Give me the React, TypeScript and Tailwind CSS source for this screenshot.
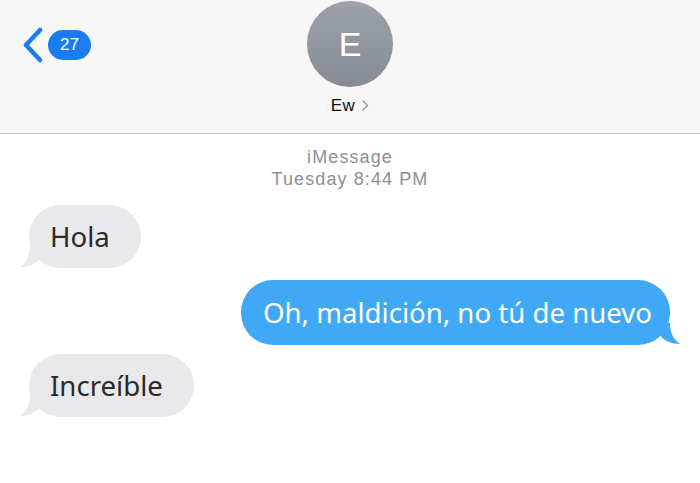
import React from 'react';

const font = { fontFamily: '"Noto Sans", "Open Sans", sans-serif' };
const sys = { fontFamily: '"Liberation Sans", Arial, sans-serif' };

const Incoming: React.FC<{ text: string }> = ({ text }) => (
  <div className="relative ml-[29px] self-start">
    <svg className="absolute -left-[9px] bottom-0" width="24" height="22" viewBox="0 0 24 22">
      <path d="M10 0 C10 10 6 17 0 21 C8 21 14 18 18 15 L24 0 Z" fill="#e9e9eb" />
    </svg>
    <div className="relative rounded-[32px] bg-[#e9e9eb] h-[63px] pl-[21px] pr-[31px] flex items-center text-[27.6px] text-[#2a2a2a]">
      {text}
    </div>
  </div>
);

const Outgoing: React.FC<{ text: string }> = ({ text }) => (
  <div className="relative mr-[30px] self-end">
    <svg className="absolute -right-[10px] bottom-0" width="24" height="22" viewBox="0 0 24 22">
      <path d="M14 0 C14 10 18 17 24 21 C16 21 10 18 6 15 L0 0 Z" fill="#3fa9f5" />
    </svg>
    <div className="relative rounded-[32px] bg-[#3fa9f5] h-[65px] pl-[22px] pr-[18px] flex items-center text-[27.6px] text-white">
      {text}
    </div>
  </div>
);

export default function App() {
  return (
    <div className="w-[700px] h-[483px] bg-white overflow-hidden" style={font}>
      <div className="relative h-[134px] bg-[#f6f6f6] border-b border-[#c8c8c8] flex flex-col items-center" style={sys}>
        <div className="absolute left-[22px] top-[27px] flex items-center gap-[4px]">
          <svg width="22" height="36" viewBox="0 0 22 36">
            <path d="M18 3 L4 18 L18 33" fill="none" stroke="#1b7cf0" strokeWidth="4.5" strokeLinecap="round" strokeLinejoin="round" />
          </svg>
          <div className="h-[30px] w-[43px] rounded-full bg-[#1b7cf0] text-white text-[17px] flex items-center justify-center">
            27
          </div>
        </div>
        <div className="mt-[1px] w-[86px] h-[86px] rounded-full bg-gradient-to-b from-[#9da1a8] to-[#878b93] flex items-center justify-center text-white text-[34px]">
          E
        </div>
        <div className="mt-[6px] flex items-center gap-[6px] text-[17px] tracking-[0.5px] text-[#111]">
          <span>Ew</span>
          <svg width="8" height="13" viewBox="0 0 8 13">
            <path d="M1.5 1.5 L6.5 6.5 L1.5 11.5" fill="none" stroke="#9a9a9a" strokeWidth="1.4" />
          </svg>
        </div>
      </div>
      <div className="flex flex-col items-center pt-[12px] text-[18px] leading-[22px] tracking-[1.1px] text-[#8e8e93]" style={sys}>
        <span>iMessage</span>
        <span>Tuesday 8:44 PM</span>
      </div>
      <div className="flex flex-col mt-[15px]">
        <Incoming text="Hola" />
        <div className="mt-[12px] flex flex-col">
          <Outgoing text="Oh, maldición, no tú de nuevo" />
        </div>
        <div className="mt-[9px] flex flex-col">
          <Incoming text="Increíble" />
        </div>
      </div>
    </div>
  );
}
